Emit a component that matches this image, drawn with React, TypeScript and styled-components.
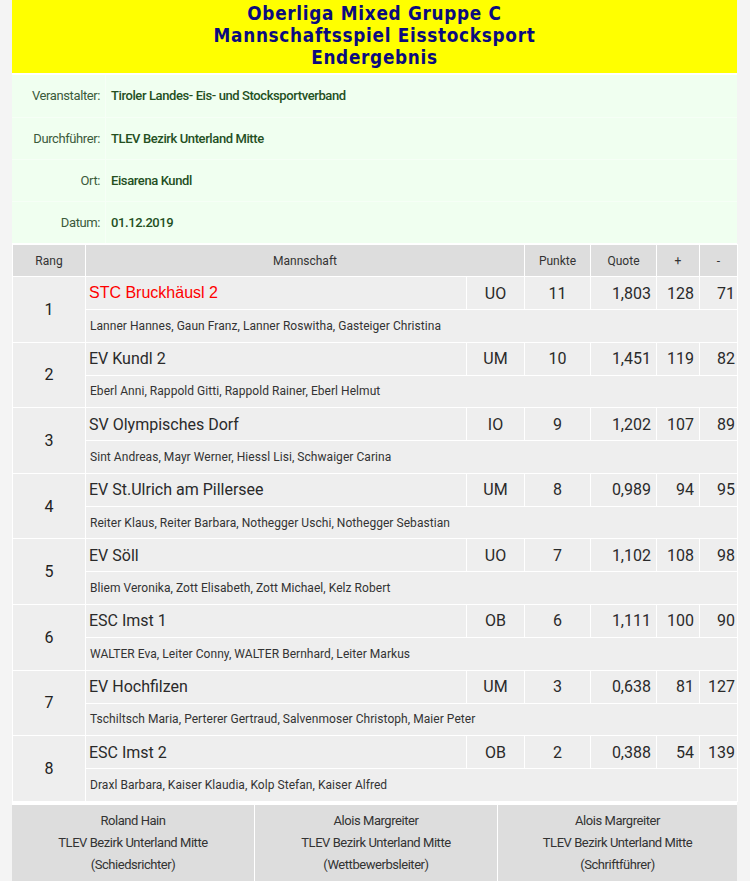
import React from "react";
import styled, { createGlobalStyle } from "styled-components";

const Global = createGlobalStyle`
  html, body { margin: 0; padding: 0; background: #ffffff; }
  body { font-family: Roboto, "Noto Sans", Arial, sans-serif; color: #333; }
`;

const Page = styled.div`
  background: #f4f4f4;
  padding: 0 13px 0 12px;
  width: 750px;
  box-sizing: border-box;
`;

const Sheet = styled.div`
  background: #ffffff;
  display: flex;
  flex-direction: column;
  gap: 2px;
`;

const Banner = styled.header`
  background: #ffff00;
  height: 73px;
  box-sizing: border-box;
  padding-top: 3px;
  text-align: center;
`;

const TitleLine = styled.div`
  font-family: "DejaVu Sans Condensed", "DejaVu Sans", sans-serif;
  font-stretch: condensed;
  font-weight: 700;
  font-size: 18.8px;
  line-height: 22px;
  letter-spacing: 0.7px;
  color: #0b0b7e;
`;

const InfoTable = styled.table`
  background: #f0fff0;
  border-collapse: collapse;
  width: 100%;
`;

const InfoRow = styled.tr`
  height: 42px;
  border-bottom: 1px solid #f6fff6;
  &:last-child { border-bottom: none; }
`;

const InfoLabel = styled.td`
  width: 88px;
  text-align: right;
  padding: 0 5px 0 0;
  font-family: Roboto, sans-serif;
  font-size: 13px;
  letter-spacing: -0.4px;
  color: #3b5a3b;
  border-right: 1px solid #f6fff6;
`;

const InfoValue = styled.td`
  padding: 0 0 0 5px;
  font-family: Roboto, sans-serif;
  font-size: 13px;
  font-weight: 500;
  letter-spacing: -0.4px;
  color: #24501f;
`;

const Results = styled.table`
  width: 100%;
  border-collapse: separate;
  border-spacing: 1px;
  background: #ffffff;
  margin: -1px 0 0;
  table-layout: fixed;
`;

const HeadCell = styled.th`
  background: #dddddd;
  height: 31px;
  padding: 0;
  font-weight: 400;
  font-size: 12px;
  color: #333;
  text-align: center;
`;

const RankCell = styled.td`
  background: #eeeeee;
  text-align: center;
  font-size: 16px;
  color: #222;
  padding: 0;
`;

const TeamCell = styled.td<{ $red?: boolean }>`
  background: #eeeeee;
  height: 32px;
  padding: 0 3px;
  font-size: 16px;
  font-family: ${(p) => (p.$red ? '"Liberation Sans", Arial, sans-serif' : "Roboto, sans-serif")};
  color: ${(p) => (p.$red ? "#ff0000" : "#2a2a2a")};
  white-space: nowrap;
`;

const NumCell = styled.td<{ $align: "center" | "right"; $pr?: number }>`
  background: #eeeeee;
  padding: 0 ${(p) => (p.$pr ?? 5)}px 0 5px;
  font-size: 16px;
  color: #2a2a2a;
  text-align: ${(p) => p.$align};
`;

const NamesCell = styled.td`
  background: #eeeeee;
  height: 31.6px;
  padding: 0 4px;
  font-size: 12px;
  letter-spacing: 0.05px;
  color: #333;
  white-space: nowrap;
`;

const Footer = styled.footer`
  display: grid;
  grid-template-columns: 242px 242px 1fr;
  gap: 1px;
  background: #ffffff;
  margin-top: 1px;
`;

const Signer = styled.div`
  background: #dddddd;
  padding: 5px 0;
  text-align: center;
  font-family: Roboto, sans-serif;
  font-size: 13px;
  letter-spacing: -0.45px;
  line-height: 22px;
  color: #333;
`;

type Team = {
  rank: number;
  name: string;
  code: string;
  pts: number;
  quote: string;
  plus: number;
  minus: number;
  players: string;
  red?: boolean;
};

const teams: Team[] = [
  { rank: 1, name: "STC Bruckhäusl 2", code: "UO", pts: 11, quote: "1,803", plus: 128, minus: 71, players: "Lanner Hannes, Gaun Franz, Lanner Roswitha, Gasteiger Christina", red: true },
  { rank: 2, name: "EV Kundl 2", code: "UM", pts: 10, quote: "1,451", plus: 119, minus: 82, players: "Eberl Anni, Rappold Gitti, Rappold Rainer, Eberl Helmut" },
  { rank: 3, name: "SV Olympisches Dorf", code: "IO", pts: 9, quote: "1,202", plus: 107, minus: 89, players: "Sint Andreas, Mayr Werner, Hiessl Lisi, Schwaiger Carina" },
  { rank: 4, name: "EV St.Ulrich am Pillersee", code: "UM", pts: 8, quote: "0,989", plus: 94, minus: 95, players: "Reiter Klaus, Reiter Barbara, Nothegger Uschi, Nothegger Sebastian" },
  { rank: 5, name: "EV Söll", code: "UO", pts: 7, quote: "1,102", plus: 108, minus: 98, players: "Bliem Veronika, Zott Elisabeth, Zott Michael, Kelz Robert" },
  { rank: 6, name: "ESC Imst 1", code: "OB", pts: 6, quote: "1,111", plus: 100, minus: 90, players: "WALTER Eva, Leiter Conny, WALTER Bernhard, Leiter Markus" },
  { rank: 7, name: "EV Hochfilzen", code: "UM", pts: 3, quote: "0,638", plus: 81, minus: 127, players: "Tschiltsch Maria, Perterer Gertraud, Salvenmoser Christoph, Maier Peter" },
  { rank: 8, name: "ESC Imst 2", code: "OB", pts: 2, quote: "0,388", plus: 54, minus: 139, players: "Draxl Barbara, Kaiser Klaudia, Kolp Stefan, Kaiser Alfred" },
];

const info = [
  ["Veranstalter:", "Tiroler Landes- Eis- und Stocksportverband"],
  ["Durchführer:", "TLEV Bezirk Unterland Mitte"],
  ["Ort:", "Eisarena Kundl"],
  ["Datum:", "01.12.2019"],
];

const signers = [
  ["Roland Hain", "(Schiedsrichter)"],
  ["Alois Margreiter", "(Wettbewerbsleiter)"],
  ["Alois Margreiter", "(Schriftführer)"],
];

// column widths for: Rang, Name, Code, Punkte, Quote, +, -
const colWidths = [72, 380, 57, 65, 65, 42, 37];

export default function App() {
  return (
    <Page>
      <Global />
      <Sheet>
        <Banner>
          <TitleLine>Oberliga Mixed Gruppe C</TitleLine>
          <TitleLine>Mannschaftsspiel Eisstocksport</TitleLine>
          <TitleLine>Endergebnis</TitleLine>
        </Banner>
        <InfoTable>
          <tbody>
            {info.map(([l, v]) => (
              <InfoRow key={l}>
                <InfoLabel>{l}</InfoLabel>
                <InfoValue>{v}</InfoValue>
              </InfoRow>
            ))}
          </tbody>
        </InfoTable>
        <Results>
          <colgroup>
            {colWidths.map((w, i) => (
              <col key={i} style={{ width: w }} />
            ))}
          </colgroup>
          <thead>
            <tr>
              <HeadCell>Rang</HeadCell>
              <HeadCell colSpan={2}>Mannschaft</HeadCell>
              <HeadCell>Punkte</HeadCell>
              <HeadCell>Quote</HeadCell>
              <HeadCell>+</HeadCell>
              <HeadCell>-</HeadCell>
            </tr>
          </thead>
          <tbody>
            {teams.map((t) => (
              <React.Fragment key={t.rank}>
                <tr>
                  <RankCell rowSpan={2}>{t.rank}</RankCell>
                  <TeamCell $red={t.red}>{t.name}</TeamCell>
                  <NumCell $align="center">{t.code}</NumCell>
                  <NumCell $align="center">{t.pts}</NumCell>
                  <NumCell $align="right">{t.quote}</NumCell>
                  <NumCell $align="right">{t.plus}</NumCell>
                  <NumCell $align="right" $pr={2}>{t.minus}</NumCell>
                </tr>
                <tr>
                  <NamesCell colSpan={6}>{t.players}</NamesCell>
                </tr>
              </React.Fragment>
            ))}
          </tbody>
        </Results>
        <Footer>
          {signers.map(([n, r], i) => (
            <Signer key={i}>
              <div>{n}</div>
              <div>TLEV Bezirk Unterland Mitte</div>
              <div>{r}</div>
            </Signer>
          ))}
        </Footer>
      </Sheet>
    </Page>
  );
}
